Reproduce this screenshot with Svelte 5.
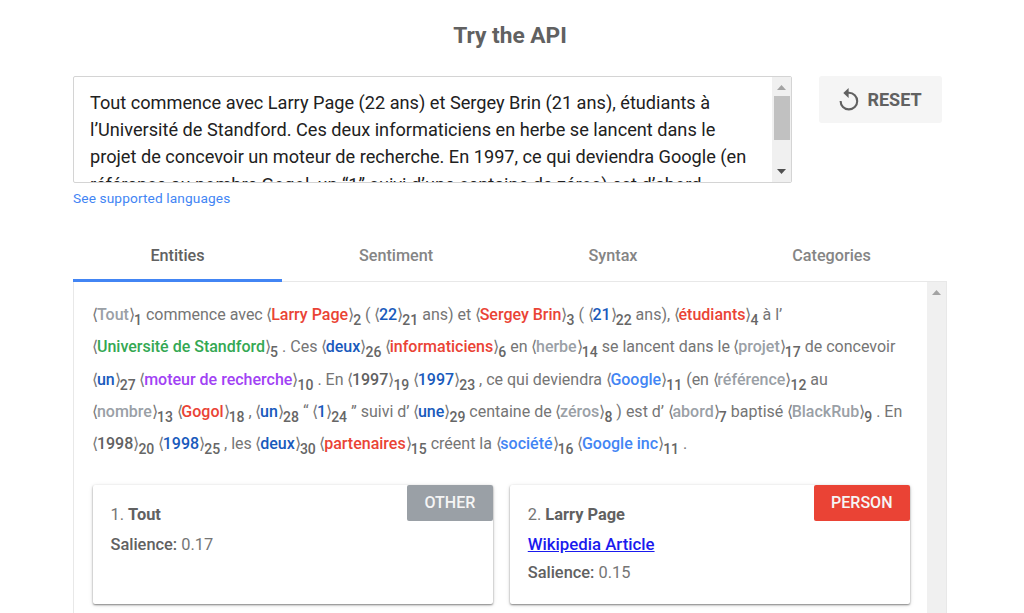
<script>
  const inputLines = [
    'Tout commence avec Larry Page (22 ans) et Sergey Brin (21 ans), étudiants à',
    'l’Université de Standford. Ces deux informaticiens en herbe se lancent dans le',
    'projet de concevoir un moteur de recherche. En 1997, ce qui deviendra Google (en',
    'référence au nombre Gogol, un “1” suivi d’une centaine de zéros) est d’abord'
  ];
  const tabs = ['Entities', 'Sentiment', 'Syntax', 'Categories'];
  const e = (text, kind, id) => ({ text, kind, id });
  const lines = [
    [e('Tout', 'other', 1), 'commence avec', e('Larry Page', 'person', 2), '(', e('22', 'number', 21), 'ans) et', e('Sergey Brin', 'person', 3), '(', e('21', 'number', 22), 'ans),', e('étudiants', 'person', 4), 'à l’'],
    [e('Université de Standford', 'place', 5), '. Ces', e('deux', 'number', 26), e('informaticiens', 'person', 6), 'en', e('herbe', 'other', 14), 'se lancent dans le', e('projet', 'other', 17), 'de concevoir'],
    [e('un', 'number', 27), e('moteur de recherche', 'good', 10), '. En', e('1997', 'date', 19), e('1997', 'number', 23), ', ce qui deviendra', e('Google', 'org', 11), '(en', e('référence', 'other', 12), 'au'],
    [e('nombre', 'other', 13), e('Gogol', 'person', 18), ',', e('un', 'number', 28), '“', e('1', 'number', 24), '” suivi d’', e('une', 'number', 29), 'centaine de', e('zéros', 'other', 8), ') est d’', e('abord', 'other', 7), 'baptisé', e('BlackRub', 'other', 9), '. En'],
    [e('1998', 'date', 20), e('1998', 'number', 25), ', les', e('deux', 'number', 30), e('partenaires', 'person', 15), 'créent la', e('société', 'org', 16), e('Google inc', 'org', 11), '.']
  ];
  const cards = [
    { id: 1, name: 'Tout', type: 'OTHER', kind: 'other', salience: '0.17' },
    { id: 2, name: 'Larry Page', type: 'PERSON', kind: 'person', salience: '0.15', wiki: true }
  ];
</script>

<main>
  <h1>Try the API</h1>
  <div class="top">
    <div class="input">
      <div class="text">
        {#each inputLines as line}<div>{line}</div>{/each}
      </div>
      <div class="bar">
        <svg class="up" width="9" height="5" viewBox="0 0 9 5"><path d="M0 5 4.5 0 9 5z" fill="#a3a3a3" /></svg>
        <div class="thumb"></div>
        <svg class="down" width="9" height="5" viewBox="0 0 9 5"><path d="M0 0 4.5 5 9 0z" fill="#505050" /></svg>
      </div>
    </div>
    <button>
      <svg width="20" height="23" viewBox="0 0 20 23">
        <path d="M1.6 13a8.3 8.3 0 1 0 8.3-8.2H8" fill="none" stroke="#616161" stroke-width="2.1" />
        <path d="M9.6 0v10L4.3 5z" fill="#616161" />
      </svg>
      RESET
    </button>
  </div>
  <div class="lang">See supported languages</div>
  <nav>
    {#each tabs as tab, i}<div class="tab" class:active={i === 0}>{tab}</div>{/each}
  </nav>
  <section>
    <div class="results">
      <div class="analysis">
        {#each lines as line}
          <div class="line">
            {#each line as t}{#if typeof t === 'string'}{t}{:else}<span class="br open">⟨</span><b class={t.kind}>{t.text}</b><span class="br close">⟩</span><sub>{t.id}</sub>{/if}{' '}{/each}
          </div>
        {/each}
      </div>
      <div class="cards">
        {#each cards as c}
          <article>
            <div class="badge {c.kind}">{c.type}</div>
            <div class="name">{c.id}. <strong>{c.name}</strong></div>
            {#if c.wiki}<div class="row"><span class="link">Wikipedia Article</span></div>{/if}
            <div class="row"><b>Salience:</b> {c.salience}</div>
          </article>
        {/each}
      </div>
    </div>
    <div class="bar">
      <svg class="up" width="9" height="5" viewBox="0 0 9 5"><path d="M0 5 4.5 0 9 5z" fill="#a3a3a3" /></svg>
    </div>
  </section>
</main>

<style>
  :global(body) { background: #fff; overflow: hidden; }
  main {
    box-sizing: border-box; height: 613px; overflow: hidden; padding: 0 77px 0 73px;
    font-family: Roboto, sans-serif; color: #757575;
    display: flex; flex-direction: column;
  }
  h1 { margin: 21px 0 0; font-size: 22.7px; line-height: 30px; font-weight: 700; text-align: center; color: #616161; }
  .top { margin-top: 25px; display: flex; gap: 27px; align-items: flex-start; }
  .input { box-sizing: border-box; width: 719px; height: 107px; border: 1px solid #d4d4d4; border-radius: 2px; display: flex; overflow: hidden; }
  .text { flex: 1; min-width: 0; padding: 12px 0 0 16px; font-size: 18.17px; line-height: 27.2px; color: #212121; white-space: nowrap; }
  .bar { flex: none; width: 19px; background: #f0f0f0; display: flex; flex-direction: column; align-items: center; }
  .up { margin-top: 8px; flex: none; }
  .thumb { width: 16px; height: 44px; margin-top: 6px; background: #c1c1c1; }
  .down { margin: auto 0 8px; flex: none; }
  button {
    width: 123px; height: 47px; border: 0; border-radius: 3px; padding: 0; background: #f5f5f5; color: #616161;
    font: 700 18px/47px Roboto, sans-serif; display: flex; align-items: center; justify-content: center; gap: 8px;
  }
  button svg { margin-top: -1px; }
  .lang { margin-top: 5px; font-size: 13.7px; line-height: 20px; color: #4285f4; letter-spacing: .12px; }
  nav { margin-top: 29px; display: flex; gap: 9px; height: 45px; }
  .tab { box-sizing: border-box; width: 209px; padding-top: 9px; text-align: center; font-size: 16.2px; line-height: 20px; font-weight: 500; color: #858585; }
  .tab:nth-child(2) { padding-left: 1px; }
  .tab:nth-child(3) { padding-right: 1px; }
  .active { color: #616161; border-bottom: 3px solid #4285f4; position: relative; }
  section { flex: 1; min-height: 0; margin-top: -1px; border: 1px solid #e8e8e8; border-bottom: 0; display: flex; overflow: hidden; }
  .results { flex: 1; min-width: 0; padding: 17px 17px 0 18.5px; }
  .analysis { font-size: 16px; }
  .line { height: 32.3px; line-height: 32px; white-space: nowrap; }
  .line b { font-weight: 500; }
  .open { margin: 0 -1.2px 0 -.4px; }
  .close { margin-right: -.9px; }
  sub { font-size: 14px; line-height: 0; color: #666; font-weight: 500; vertical-align: -5px; }
  b.other { color: #9aa0a6; }
  b.person { color: #ea4335; }
  b.number { color: #185abc; }
  b.place { color: #34a853; }
  b.good { color: #a142f4; }
  b.org { color: #4285f4; }
  b.date { color: #616161; }
  .cards { margin-top: 25px; display: flex; gap: 17px; }
  article {
    position: relative; box-sizing: border-box; flex: 1; height: 119px; border-radius: 2px; padding: 14px 18px; background: #fff;
    box-shadow: 0 1px 2px rgba(0,0,0,.45), 0 1px 5px rgba(0,0,0,.12); font-size: 16.4px; line-height: 27.2px;
  }
  .name { line-height: 32px; }
  .name strong { color: #616161; }
  .row b { font-weight: 500; color: #616161; }
  .link { color: #1a1aee; font-weight: 500; text-decoration: underline; font-size: 16.8px; }
  .badge { position: absolute; right: 0; top: 0; padding: 0 17.5px; line-height: 36px; border-radius: 2px; color: #f5f5f5; font-size: 16px; font-weight: 500; }
  .badge.other { background: #9aa0a6; }
  .badge.person { background: #ea4335; }
</style>
